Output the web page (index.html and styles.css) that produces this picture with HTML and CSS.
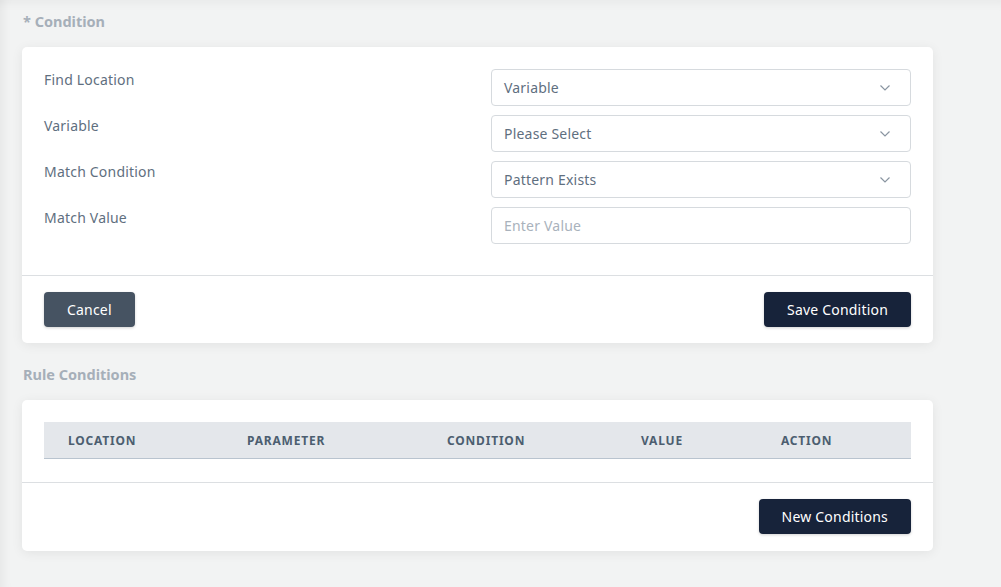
FILE: index.html
```html
<!DOCTYPE html>
<html>
<head>
<meta charset="utf-8">
<link rel="stylesheet" href="styles.css">
</head>
<body>
<div class="page">
  <h2 class="section-title">* Condition</h2>
  <div class="card">
    <div class="card-body form">
      <div class="form-row">
        <label class="label">Find Location</label>
        <div class="control select"><span>Variable</span><svg class="chev" width="12" height="8" viewBox="0 0 12 8"><path d="M1.5 1.5l4.5 4.5 4.5-4.5" fill="none" stroke="#8a95a1" stroke-width="1.2"/></svg></div>
      </div>
      <div class="form-row">
        <label class="label">Variable</label>
        <div class="control select"><span>Please Select</span><svg class="chev" width="12" height="8" viewBox="0 0 12 8"><path d="M1.5 1.5l4.5 4.5 4.5-4.5" fill="none" stroke="#8a95a1" stroke-width="1.2"/></svg></div>
      </div>
      <div class="form-row">
        <label class="label">Match Condition</label>
        <div class="control select"><span>Pattern Exists</span><svg class="chev" width="12" height="8" viewBox="0 0 12 8"><path d="M1.5 1.5l4.5 4.5 4.5-4.5" fill="none" stroke="#8a95a1" stroke-width="1.2"/></svg></div>
      </div>
      <div class="form-row">
        <label class="label">Match Value</label>
        <div class="control"><span class="placeholder">Enter Value</span></div>
      </div>
    </div>
    <div class="card-footer between">
      <button class="btn btn-gray">Cancel</button>
      <button class="btn btn-dark">Save Condition</button>
    </div>
  </div>

  <h2 class="section-title">Rule Conditions</h2>
  <div class="card">
    <div class="card-body table-body">
      <div class="thead">
        <div class="th">LOCATION</div>
        <div class="th">PARAMETER</div>
        <div class="th">CONDITION</div>
        <div class="th">VALUE</div>
        <div class="th">ACTION</div>
      </div>
    </div>
    <div class="card-footer end">
      <button class="btn btn-dark">New Conditions</button>
    </div>
  </div>
</div>
</body>
</html>
```
FILE: styles.css
```css
html, body {
  margin: 0;
  padding: 0;
}
body {
  background: #f2f3f3;
  font-family: "Noto Sans", "Liberation Sans", sans-serif;
  width: 1001px;
  height: 587px;
  overflow: hidden;
  box-shadow: inset 12px 0 12px -10px rgba(0,0,0,0.06), inset 0 12px 12px -10px rgba(0,0,0,0.05);
}
.page {
  padding: 0 0 0 22px;
  width: 911px;
}
.section-title {
  margin: 0;
  height: 47px;
  box-sizing: border-box;
  padding-top: 11px;
  padding-left: 1px;
  font-size: 14.5px;
  line-height: 20px;
  font-weight: 700;
  color: #a6afb9;
}
.page .card + .section-title {
  height: 57px;
  padding-top: 21px;
}
.card {
  background: #fff;
  border-radius: 5px;
  box-shadow: 0 2px 12px rgba(0,0,0,0.07);
}
.card-body.form {
  padding: 22px 22px 31px 22px;
  display: flex;
  flex-direction: column;
  gap: 9px;
}
.form-row {
  display: flex;
  align-items: flex-start;
}
.label {
  width: 447px;
  font-size: 14px;
  line-height: 20px;
  padding-top: 1px;
  letter-spacing: 0.2px;
  color: #5f6f80;
}
.control {
  width: 420px;
  height: 37px;
  box-sizing: border-box;
  border: 1px solid #d6dade;
  border-radius: 4px;
  display: flex;
  align-items: center;
  justify-content: space-between;
  padding: 0 19px 0 12px;
  font-size: 14px;
  letter-spacing: 0.2px;
  color: #5f6f80;
}
.placeholder {
  color: #a9b2bc;
}
.chev {
  display: block;
}
.card-footer {
  border-top: 1px solid #dcdfe2;
  padding: 16px 22px;
  display: flex;
}
.card-footer.between { justify-content: space-between; }
.card-footer.end {
  justify-content: flex-end;
  padding-bottom: 17px;
}
.btn {
  height: 35px;
  border: none;
  border-radius: 4px;
  color: #fff;
  font-family: inherit;
  font-size: 14px;
  letter-spacing: 0.2px;
  padding: 0 23px;
  box-shadow: 0 1px 3px rgba(0,0,0,0.18);
  cursor: pointer;
}
.btn-gray { background: #465362; }
.btn-dark { background: #17233a; }
.card-body.table-body {
  padding: 22px 22px 23px 22px;
}
.thead {
  display: grid;
  grid-template-columns: 179px 200px 194px 140px 1fr;
  background: #e4e7eb;
  border-bottom: 1px solid #b9c4cf;
  height: 37px;
  box-sizing: border-box;
  align-items: center;
}
.th {
  padding-left: 24px;
  font-size: 12px;
  font-weight: 700;
  letter-spacing: 0.8px;
  color: #4c5e70;
}
```
